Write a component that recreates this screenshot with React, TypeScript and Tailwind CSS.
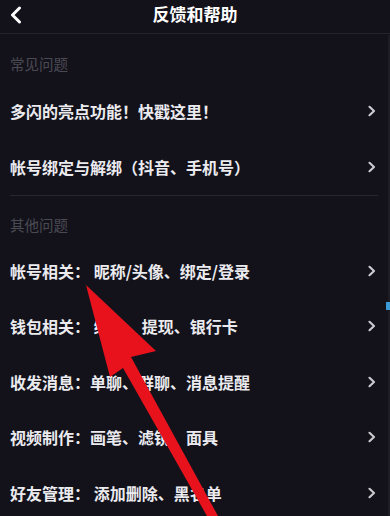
import React from "react";

const font = { fontFamily: '"Noto Sans CJK SC", "Noto Sans", sans-serif' };

function Chevron() {
  return (
    <svg width="10" height="12" viewBox="0 0 10 12" className="shrink-0">
      <path d="M2.5 1.8 L7 6 L2.5 10.2" fill="none" stroke="#c9c9ce" strokeWidth="2.2" strokeLinecap="round" strokeLinejoin="round" />
    </svg>
  );
}

function Row({ text, h }: { text: string; h: string }) {
  return (
    <div className={`flex items-center justify-between pl-[10px] pr-[13px] ${h}`}>
      <span className="text-[16px] font-bold text-[#ebebef] leading-none whitespace-pre">{text}</span>
      <Chevron />
    </div>
  );
}

export default function App() {
  return (
    <div className="relative w-[390px] h-[516px] overflow-hidden bg-[#13121b]" style={font}>
      <div className="relative flex h-[34px] items-center justify-center border-b border-[#24232d]">
        <svg width="14" height="18" viewBox="0 0 14 18" className="absolute left-[9px] top-[6px]">
          <path d="M10.5 2 L3.5 9 L10.5 16" fill="none" stroke="#ffffff" strokeWidth="3" strokeLinecap="round" strokeLinejoin="round" />
        </svg>
        <span className="text-[17px] font-bold text-white leading-none -mt-[6px]">反馈和帮助</span>
      </div>

      <div className="flex h-[49px] items-end pl-[10px] pb-[9px]">
        <span className="text-[14.5px] text-[#4b4a53] leading-[20px]">常见问题</span>
      </div>
      <Row text="多闪的亮点功能！快戳这里！" h="h-[56px]" />
      <Row text="帐号绑定与解绑（抖音、手机号）" h="h-[56px]" />
      <div className="ml-[10px] mr-[12px] h-px bg-[#272630]" />

      <div className="flex h-[47px] items-end pl-[10px] pb-[8px]">
        <span className="text-[14.5px] text-[#4b4a53] leading-[20px]">其他问题</span>
      </div>
      <Row text="帐号相关： 昵称/头像、绑定/登录" h="h-[55.5px]" />
      <Row text="钱包相关： 绑卡、提现、银行卡" h="h-[55.5px]" />
      <Row text="收发消息：单聊、群聊、消息提醒" h="h-[55.5px]" />
      <Row text="视频制作：画笔、滤镜、面具" h="h-[55.5px]" />
      <Row text="好友管理： 添加删除、黑名单" h="h-[55.5px]" />

      <div className="absolute right-0 top-[35px] bottom-0 w-[2px] bg-[#1d1c25]" />
      <div className="absolute right-0 top-[302px] w-[4px] h-[8px] bg-[#3b9ad8]" />

      <svg className="pointer-events-none absolute inset-0" width="390" height="516" viewBox="0 0 390 516">
        <polygon
          points="86,285 156,351 131,357 218,516 207,516 123,368 110,377"
          fill="#e8121c"
        />
      </svg>
    </div>
  );
}
